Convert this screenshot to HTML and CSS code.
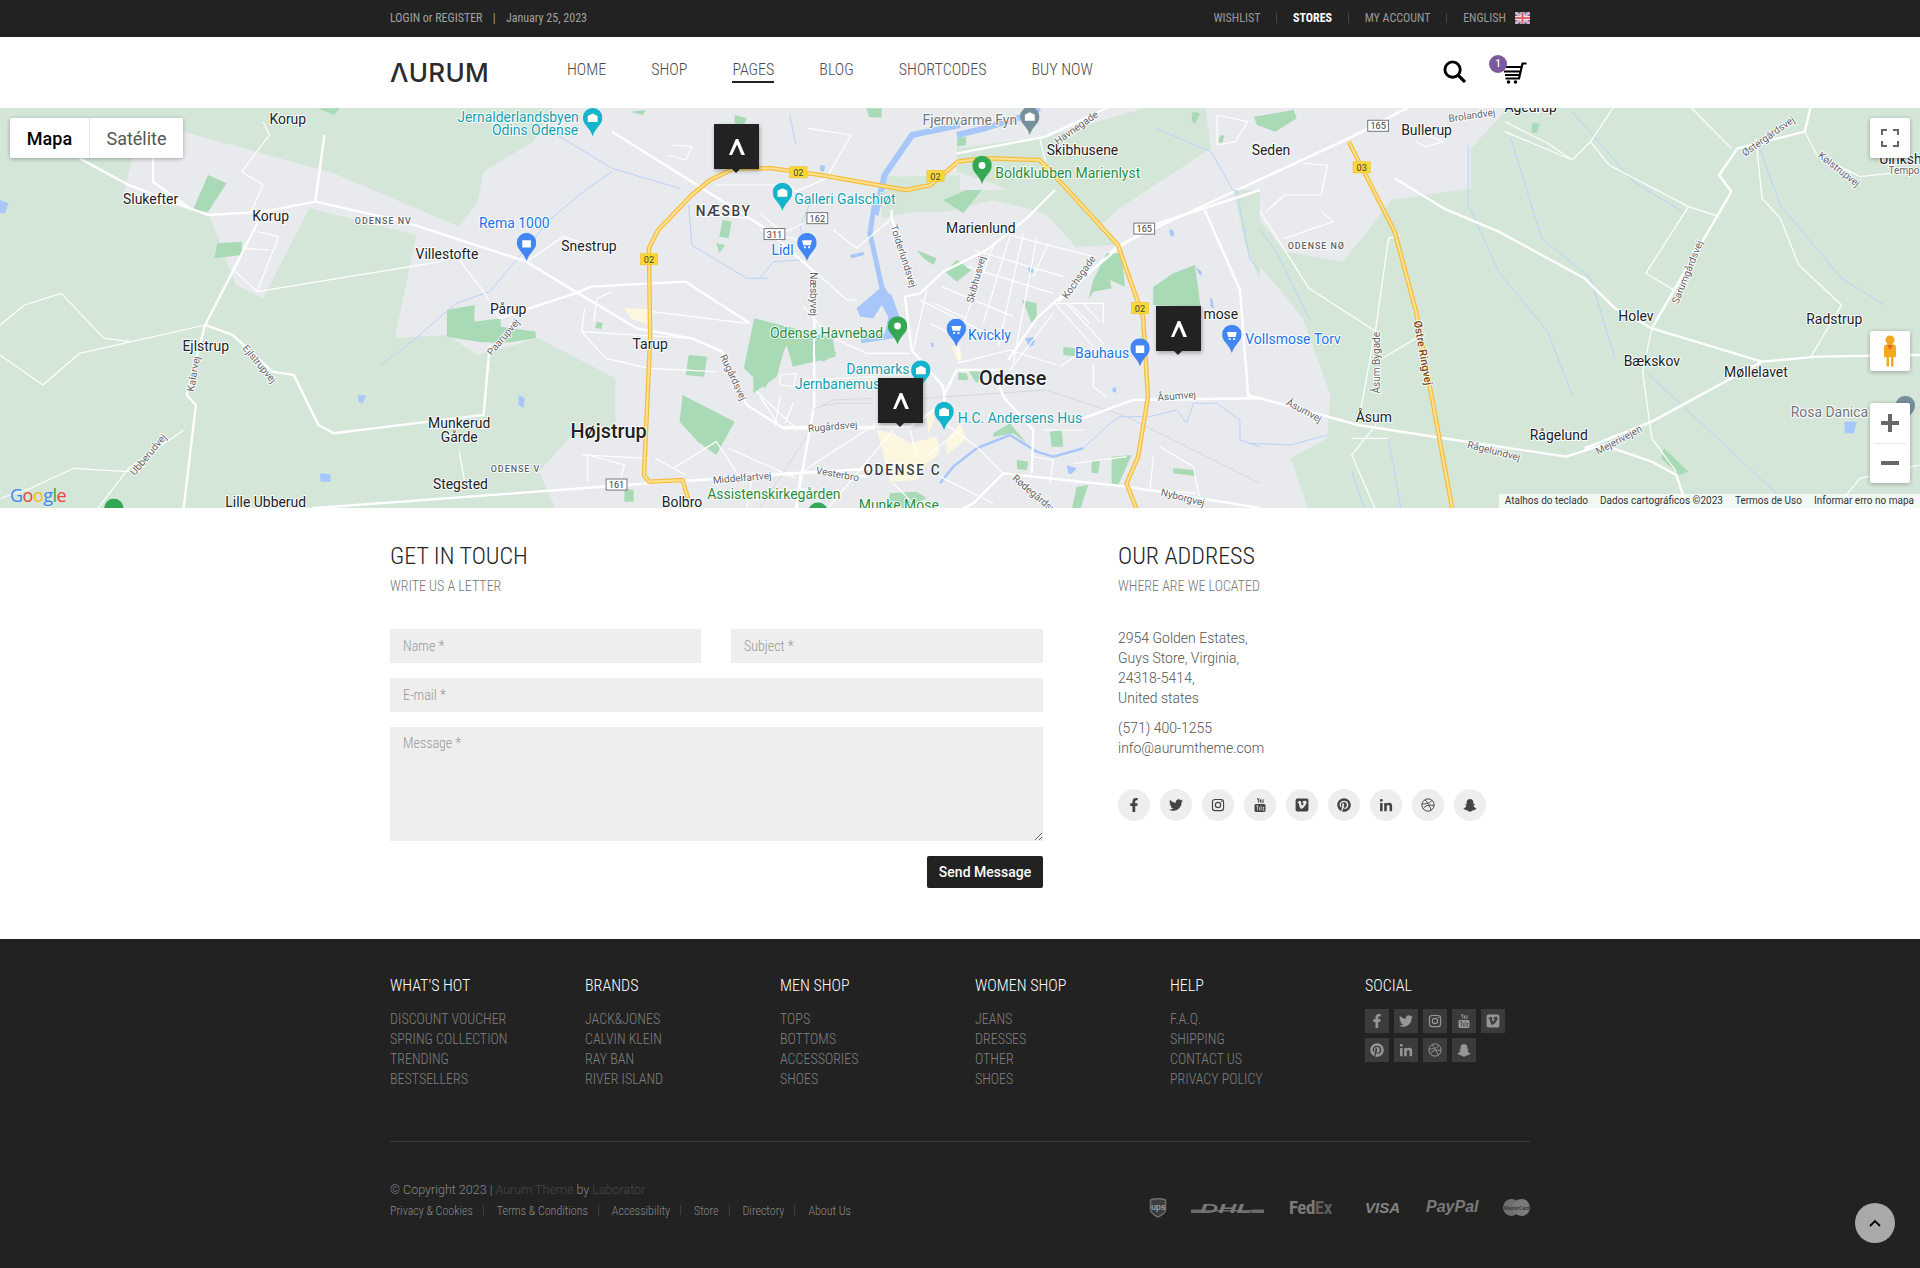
FILE: index.html
```html
<!DOCTYPE html>
<html lang="en">
<head>
<meta charset="utf-8">
<title>Contact – Aurum</title>
<link rel="stylesheet" href="styles.css">
</head>
<body>
<svg class="defs" width="0" height="0" aria-hidden="true">
  <symbol id="i-fb" viewBox="0 0 320 512"><path d="M279.14 288l14.22-92.66h-88.91v-60.13c0-25.35 12.42-50.06 52.24-50.06h40.42V6.26S260.43 0 225.36 0c-73.22 0-121.08 44.38-121.08 124.72v70.62H22.89V288h81.39v224h100.17V288z"/></symbol>
  <symbol id="i-tw" viewBox="0 0 512 512"><path d="M459.37 151.716c.325 4.548.325 9.097.325 13.645 0 138.72-105.583 298.558-298.558 298.558-59.452 0-114.68-17.219-161.137-47.106 8.447.974 16.568 1.299 25.34 1.299 49.055 0 94.213-16.568 130.274-44.832-46.132-.975-84.792-31.188-98.112-72.772 6.498.974 12.995 1.624 19.818 1.624 9.421 0 18.843-1.3 27.614-3.573-48.081-9.747-84.143-51.98-84.143-102.985v-1.299c13.969 7.797 30.214 12.67 47.431 13.319-28.264-18.843-46.781-51.005-46.781-87.391 0-19.492 5.197-37.36 14.294-52.954 51.655 63.675 129.3 105.258 216.365 109.807-1.624-7.797-2.599-15.918-2.599-24.04 0-57.828 46.782-104.934 104.934-104.934 30.213 0 57.502 12.67 76.67 33.137 23.715-4.548 46.456-13.32 66.599-25.34-7.798 24.366-24.366 44.833-46.132 57.827 21.117-2.273 41.584-8.122 60.426-16.243-14.292 20.791-32.161 39.308-52.628 54.253z"/></symbol>
  <symbol id="i-ig" viewBox="0 0 24 24"><path d="M7 1.500h10A5.500 5.500 0 0 1 22.500 7v10a5.500 5.500 0 0 1-5.500 5.500H7A5.500 5.500 0 0 1 1.500 17V7A5.500 5.500 0 0 1 7 1.500zm0 2A3.500 3.500 0 0 0 3.500 7v10A3.500 3.500 0 0 0 7 20.500h10a3.500 3.500 0 0 0 3.500-3.500V7A3.500 3.500 0 0 0 17 3.500zM12 6.500a5.500 5.500 0 1 1 0 11 5.500 5.500 0 0 1 0-11zm0 2a3.500 3.500 0 1 0 0 7 3.500 3.500 0 0 0 0-7zM18 4.800a1.200 1.200 0 1 1 0 2.400 1.200 1.200 0 0 1 0-2.400z" fill-rule="evenodd"/></symbol>
  <symbol id="i-yt" viewBox="0 0 24 28"><path d="M6 0h1.600l1 3.200L9.700 0h1.500L9.400 5.500v4H7.800v-4zM11.500 3.800c0-.9.600-1.400 1.400-1.400s1.400.5 1.400 1.400v4.100c0 .9-.6 1.500-1.400 1.500s-1.400-.6-1.400-1.500zM15.500 2.500h1.300v5.600c.5.200.8-.1 1-.3V2.500h1.300v7h-1.300v-.7c-.9 1-2.300.9-2.300-.4z"/><path fill-rule="evenodd" d="M4 12h16c1.700 0 3 1.300 3 3v10c0 1.700-1.300 3-3 3H4c-1.700 0-3-1.300-3-3V15c0-1.700 1.300-3 3-3zm.5 3v1.500h1.400V25h1.400v-8.500h1.400V15zM10 18v7h1.300v-7zM13.500 15v10h1.300v-10zM17.500 18v7h3v-1.400h-1.500v-4.200h1.500V18z"/></symbol>
  <symbol id="i-vm" viewBox="0 0 24 24"><path fill-rule="evenodd" d="M4 1h16a3 3 0 0 1 3 3v16a3 3 0 0 1-3 3H4a3 3 0 0 1-3-3V4a3 3 0 0 1 3-3zm15.800 6.500c.1-2-1-3-3-3-2.300 0-3.800 1.300-4.500 3.800 1.200-.6 2.800-.6 2.500 1.200-.2 1-2 3.800-2.700 3.800-1 0-1.500-5.500-2.200-7.300-.5-1.300-1.600-1.700-2.800-1-1 .6-2 1.600-3.300 2.700l.7 1c.5-.3 1.100-.8 1.500-.4.700.7 1.300 5.800 2.800 8.700.8 1.500 2 2 3.300 1.200 2.500-1.500 7.500-7 7.700-10.700z"/></symbol>
  <symbol id="i-pi" viewBox="0 0 496 512"><path d="M496 256c0 137-111 248-248 248-25.600 0-50.200-3.900-73.400-11.100 10.100-16.500 25.200-43.500 30.800-65 3-11.600 15.400-59 15.400-59 8.100 15.400 31.700 28.500 56.800 28.500 74.800 0 128.700-68.800 128.700-154.300 0-81.900-66.900-143.200-152.900-143.200-107 0-163.900 71.800-163.900 150.100 0 36.400 19.400 81.700 50.300 96.100 4.700 2.200 7.200 1.200 8.300-3.300.8-3.400 5-20.300 6.900-28.100.6-2.500.3-4.700-1.700-7.100-10.100-12.500-18.300-35.300-18.300-56.600 0-54.700 41.400-107.600 112-107.600 60.900 0 103.600 41.500 103.600 100.900 0 67.100-33.900 113.600-78 113.600-24.300 0-42.600-20.100-36.700-44.800 7-29.500 20.500-61.300 20.500-82.600 0-19-10.200-34.900-31.400-34.900-24.900 0-44.900 25.700-44.900 60.200 0 22 7.400 36.800 7.400 36.800s-24.500 103.800-29 123.200c-5 21.400-3 51.600-.9 71.200C65.400 450.900 0 361.100 0 256 0 119 111 8 248 8s248 111 248 248z"/></symbol>
  <symbol id="i-in" viewBox="0 0 448 512"><path transform="translate(0 32)" d="M100.280 448H7.400V148.900h92.880zM53.790 108.100C24.090 108.100 0 83.500 0 53.800a53.790 53.790 0 0 1 107.580 0c0 29.700-24.100 54.300-53.790 54.300zM447.900 448h-92.680V302.400c0-34.700-.7-79.200-48.290-79.200-48.290 0-55.690 37.700-55.690 76.700V448h-92.780V148.900h89.080v40.800h1.300c12.400-23.500 42.690-48.300 87.880-48.300 94 0 111.280 61.900 111.280 142.300V448z"/></symbol>
  <symbol id="i-dr" viewBox="0 0 24 24"><g fill="none" stroke="currentColor" stroke-width="1.700"><circle cx="12" cy="12" r="10.500"/><path d="M7 3.200c4 4.500 8.500 11 10.500 18M2 10c6 .5 12 .2 17-6M3.500 18.500C7 13.500 13 11 22 12.800"/></g></symbol>
  <symbol id="i-sn" viewBox="0 0 24 24"><path d="M12 1.500c3.800 0 5.800 2.800 5.800 6v3.200l2-.6c.8 0 1.100.9.500 1.400l-2.300 1.300c.6 2.300 2.500 4 5 5 .5.300.4.900-.1 1.100l-2.500.7-.5 1.600-2.500-.2c-1.600 0-2.800 2.500-5.400 2.500s-3.800-2.500-5.400-2.500l-2.500.2-.5-1.600-2.500-.7c-.5-.2-.6-.8-.1-1.100 2.500-1 4.400-2.700 5-5L3.700 12c-.6-.5-.3-1.400.5-1.400l2 .6V7.500c0-3.200 2-6 5.800-6z"/></symbol>
  <symbol id="i-mark" viewBox="0 0 16 16"><path d="M0 16 6.800 0H9.200L16 16H12.400L8 5.600 3 16z"/></symbol>
  <symbol id="pin" viewBox="0 0 18 26"><path d="M9 0a9 9 0 0 1 9 9c0 6.500-6.500 9-9 17C6.500 18 0 15.500 0 9a9 9 0 0 1 9-9z"/></symbol>
</svg>

<header class="topbar">
  <div class="wrap topbar-in">
    <div class="top-left">LOGIN or REGISTER <span class="bar">|</span> January 25, 2023</div>
    <nav class="top-right">
      <a class="top-link">WISHLIST</a><i class="tsep"></i>
      <a class="top-link strong">STORES</a><i class="tsep"></i>
      <a class="top-link">MY ACCOUNT</a><i class="tsep"></i>
      <a class="top-link">ENGLISH</a>
      <svg class="flag" viewBox="0 0 15 12"><rect width="15" height="12" fill="#4a6cb0"/><path d="M0 0l15 12M15 0 0 12" stroke="#f2e6e6" stroke-width="2.500"/><path d="M0 0l15 12M15 0 0 12" stroke="#e0707a" stroke-width="1"/><path d="M7.500 0v12M0 6h15" stroke="#f2e6e6" stroke-width="4"/><path d="M7.500 0v12M0 6h15" stroke="#e0606c" stroke-width="2.200"/></svg>
    </nav>
  </div>
</header>

<div class="mainbar">
  <div class="wrap mainbar-in">
    <a class="logo">ΛURUM</a>
    <nav class="menu">
      <a>HOME</a><a>SHOP</a><a class="active">PAGES</a><a>BLOG</a><a>SHORTCODES</a><a>BUY NOW</a>
    </nav>
    <div class="tools">
      <svg class="search" viewBox="0 0 24 24"><circle cx="10" cy="10" r="8" fill="none" stroke="#000" stroke-width="3"/><path d="M16 16l7 7" stroke="#000" stroke-width="3.400"/></svg>
      <div class="cart">
        <svg class="cart-ico" viewBox="0 0 25 22"><path d="M24.500 1.500h-4L17 16.500H3.500M1 5h18.500M2 9.500H18.300M3 13H17.300" fill="none" stroke="#000" stroke-width="2.200"/><circle cx="6.500" cy="20" r="1.800"/><circle cx="13.500" cy="20" r="1.800"/></svg>
        <span class="badge">1</span>
      </div>
    </div>
  </div>
</div>

<section class="map">
  <svg class="map-svg" viewBox="0 0 1920 400" preserveAspectRatio="none">
    <rect width="1920" height="400" class="land"/>
    <!-- west half -->
    <g transform="translate(0,-3) scale(.6122,.3333)">
      <path class="green" d="M0 0H905L870 110 790 200 780 290 750 365 545 205 290 75 215 165 200 280 340 320 385 540 430 580 505 310 680 390 645 700 730 690 780 750 880 700 1005 820 1005 960 930 1000 880 1100 910 1220H0z"/>
      <path class="green" d="M1440 340 1568 290V210L1470 215 1440 210z"/>
      <g class="park">
        <path d="M340 210 370 235 340 320 315 315z"/><path d="M355 415 395 410 395 450 350 460z"/>
        <path d="M730 615 775 600V650L818 640V665L875 680V700L820 715 780 710 730 695z"/>
        <path d="M1232 640 1360 700 1365 755 1295 785 1285 720 1250 850 1215 790z"/>
        <path d="M1115 870 1200 950 1170 1050 1140 1010 1110 950z"/><path d="M1125 750 1155 755 1150 815 1120 810z"/>
        <path d="M1180 345 1195 350 1190 400 1175 395z"/><path d="M1170 415 1185 420 1175 445z"/>
        <path d="M1200 30 1220 40 1215 60 1200 55z"/>
        <path d="M1030 20 1055 15 1050 30z"/><path d="M1415 10 1440 10 1440 38 1420 36z"/>
        <path d="M520 10 555 10 545 30z"/><path d="M975 650 985 655 982 672 972 668z"/>
        <path d="M1020 1150 1035 1155 1035 1190 1020 1190z"/>
      </g>
      <path class="sand" d="M1020 610 1060 612 1060 660 1030 640z"/>
      <g class="water">
        <path d="M910 90 1000 190 1110 250M1000 200 960 250 900 340 800 560 745 595 660 730 620 780M1125 300 1130 420 1220 520 1255 520M1290 30 1300 120"/>
      </g>
      <path class="river" d="M1568 60 1490 90 1445 210 1430 330"/>
      <path class="lake" d="M0 285 14 295 8 325 0 325zM585 870 598 872 592 895 585 890zM847 870 857 880 855 910 847 900zM522 1105 540 1108 540 1130 524 1130zM1340 180 1348 182 1346 200 1340 198z"/>
      <g class="road">
        <path d="M530 90 515 290 660 350 860 470 940 560 1040 670 1130 700 1180 740 1220 900 1280 970 1430 970M515 290 430 320 340 330 310 310 250 230 250 100M130 160 210 240 310 310M430 320 380 500 335 660 305 870 320 900 300 1210M335 660 380 690 445 800 480 810 520 960 545 985 700 950 790 930 800 720M1000 80 1130 230 1250 370 1330 500 1330 900 1300 1210M510 1210 1060 1135 1430 1090M815 640 940 565 965 545 1120 530 1145 560 1225 655"/>
      </g>
      <g class="road thin">
        <path d="M335 660 215 710 130 745 70 840 0 750M0 660 40 600 100 565 170 700 215 710M420 560 720 470 740 440 790 560 815 640M860 470 920 395 1000 440M430 50 440 90 395 200 430 240 410 320M420 380 455 395 420 560 385 500M400 430 440 435M300 975 210 1090 160 1210M210 1100 120 1090 50 1150 0 1180M750 1040 760 1140M1320 70 1390 90 1350 220 1300 260M1100 120 1130 125 1120 165 1090 150M1170 240 1290 240 1310 280M1170 330 1220 340M1065 620 1220 655M950 680 1130 700M955 610 950 680 990 760 1060 790M1060 790 1170 800M1000 560 975 580 970 650M1100 1090 1170 1010 1210 1120M1230 850 1300 970M1190 1030 1300 1120M1220 1210 1230 1100M950 1050 1060 1060M960 1130 960 1050 1020 1080 1010 1150M1070 1060 1120 1110M1240 1160 1330 1150"/>
      </g>
      <path class="hw-o" d="M1568 165 1520 240 1480 255 1340 210 1260 190 1200 190 1160 225 1130 270 1075 375 1060 430 1062 700 1052 1110 1060 1130 1115 1125 1130 1220"/>
      <path class="hw-i" d="M1568 165 1520 240 1480 255 1340 210 1260 190 1200 190 1160 225 1130 270 1075 375 1060 430 1062 700 1052 1110 1060 1130 1115 1125 1130 1220"/>
    </g>
    <!-- east half -->
    <g transform="translate(960,-3) scale(.6122,.3333)">
      <path class="green" d="M900 0 835 130 835 250 705 285 670 370 625 470 530 440 480 320 450 265 480 460 560 640 605 870 600 1000 540 1060 570 1220H1570V0z"/>
      <path class="green" d="M-5 130 140 95 320 0 400 0 410 130 260 310 190 430 150 330 60 240-5 200z"/>
      <g class="park">
        <path d="M480 35 545 15 550 40 515 80 485 60z"/><path d="M-5 100 10 95 10 120-5 125z"/>
        <path d="M1150 1030 1190 1100 1175 1110 1145 1060z"/>
        <path d="M935 55 947 55 942 85 933 80z"/>
        <path d="M425 90 432 92 428 115 422 110z"/><path d="M380 20 392 25 385 55 378 50z"/>
      </g>
      <g class="water">
        <path d="M320 70 410 140 450 270 520 450 570 640M470 1015 540 1020 600 990M830 120 830 300 880 500 960 680 1000 870M900 100 950 400 1030 520 1070 760M1120 800 1360 1210M1000 20 1100 230 1180 320M1300 100 1340 300 1440 520 1510 600M640 1100 660 1210M700 1000 720 1210"/>
      </g>
      <path class="river" d="M-5 90 40 70 110 30 130 10"/>
      <path class="lake" d="M345 375 350 390 345 395 342 380zM1445 950 1465 950 1460 985 1445 985z"/>
      <g class="road">
        <path d="M740 0 635 100 400 300 260 420 160 590M-5 145 140 95 250 0M470 870 650 960 790 1000 990 1055 1050 1020 1130 1070 1170 1110 1190 1220M1310 770 1400 755 1568 750M1310 770 1130 950 1020 1030M1130 670 1260 260 1240 210 1270 130 1380 80 1390 0M710 220 790 310 880 380 1020 520 1070 610 1130 670 1310 770"/>
      </g>
      <g class="road thin">
        <path d="M130 100 140 170M650 960 680 660 700 400 720 390M680 960 640 1050 680 1220M1130 670 1115 800 1130 1000 1170 1100M1380 80 1400 150 1470 215 1568 195M1000 165 890 80M1030 110 1000 165 960 115 890 50M1190 0 1260 130M1190 305 1240 335M1060 180 1190 305 1120 505 1180 570M1070 0 1030 110 1060 180M500 320 530 270 590 270 600 180 560 175M590 320 610 350 530 400M470 260 570 550 680 680M1430 1210 1470 1120 1568 1080M1440 600 1390 755M1300 100 1310 280 1340 340 1370 480 1440 600M690 760 745 700M420 30 470 50 450 110 420 120zM760 90 790 110 760 125 745 110M640 1000 700 1000"/>
      </g>
      <path class="hw-o" d="M635 110 710 380 745 620 805 1220"/>
      <path class="hw-i" d="M635 110 710 380 745 620 805 1220"/>
    </g>
    <!-- city centre, drawn at 1/3 scale -->
    <g transform="translate(760,82) scale(.3333)">
      <path class="green" d="M400 65 520 0H930L1075 165 950 170 860 75 800 55 700 30 560 65z"/>
      <path class="green" d="M1420 0 1500 0V270L1455 160z"/>
      <g class="park">
        <path d="M-20 400 75 470 50 560-20 610zM165 450 230 490 190 515 165 500z"/>
        <path d="M550 30 620 0H665L610 70z"/><path d="M470 180 530 205 520 225 490 205z"/><path d="M555 245 590 210 635 240 590 275z"/>
        <path d="M785 330 830 340 830 385 815 400 800 360z"/><path d="M1040 190 1085 190 1095 290 1050 270 1055 295 1000 305 985 330 1000 270 1010 250z"/>
        <path d="M1180 290 1240 250 1305 225 1322 350 1180 345z"/><path d="M910 470 945 475 945 498 910 495z"/><path d="M595 548 620 550 625 570 595 570z"/>
        <path d="M625 540 680 540 650 580 640 565z"/><path d="M700 730 750 700 800 760 760 730 700 740z"/><path d="M870 725 905 720 910 770 875 770z"/>
        <path d="M770 810 805 815 800 840 772 838z"/><path d="M995 810 1020 810 1015 850 995 848z"/><path d="M1055 800 1115 795 1075 885 1055 880z"/>
        <path d="M1240 835 1305 840 1305 858 1240 850z"/><path d="M950 890 985 885 960 960 935 960z"/><path d="M390 910 470 905 500 925 420 960 380 960z"/>
      </g>
      <path class="sand" d="M350 720 400 730 450 760 530 740 540 790 500 820 470 870 390 875 370 790z"/>
      <path class="sand" d="M560 750 600 700 620 745 560 795zM575 470 600 465 605 510 590 510zM500 680 525 650 520 700 505 730z"/>
      <path class="river thick" d="M345 30 330 130 365 290 400 350"/>
      <path class="lake" d="M290 355 360 295 395 315 420 385 400 445 305 460 300 435 375 430 385 380 365 345 340 385 300 380z"/>
      <path class="lake" d="M270 195 310 185 312 195 275 205zM805 230 818 228 820 248 808 248zM512 458 520 458 522 470 514 470zM795 445 825 440 822 465 808 470zM1228 118 1240 120 1242 138 1232 136zM1057 595 1068 592 1068 608 1058 606zM920 826 950 835 935 852 925 850zM1350 322 1358 330 1362 355 1352 350zM1310 232 1325 245 1325 258 1315 250z"/>
      <path class="river thin2" d="M540 880 580 830 650 775 750 735 830 785 880 800 970 775"/>
      <path class="water-l" d="M970 775 1050 700 1080 680 1170 680 1250 660 1280 700 1300 640 1370 640 1440 690 1440 750 1500 770M1430 0 1470 210 1500 240M0 265 40 215 120 210M150 40 120 110 130 140"/>
      <path class="rail" d="M160 660 220 630 340 625M180 650 230 640 340 640M490 625 860 600 1100 680 1500 880M0 954 140 740"/>
      <g class="road">
        <path d="M1500 0 1180 105 1080 170 885 335 830 385 745 510M885 0 800 85 680 180 550 245 480 310 435 320 455 480 550 590 555 640M1330 50 1440 300 1465 620M970 685 1120 630 1500 625M730 850 1100 890 1500 954M730 850 640 940 600 960M720 590 730 620 820 720 815 850M395 60 395 85 465 290M0 855 170 845 320 860M555 610 590 540 730 540M350 710 450 710 550 640"/>
      </g>
      <g class="road thin">
        <path d="M700 170 610 400M750 135 670 400M790 130 715 470M830 145 760 520M865 160 820 260M620 230 880 310M545 290 760 380M480 330 700 440M640 180 910 260M750 135 1000 200M500 300 460 480M590 520 750 480 890 525M880 370 750 540M920 340 1030 460 1000 490M890 340 1030 340 1030 400M930 340 990 400M970 340 1020 395M885 340 1000 470M1000 520 1000 590 1040 620M900 530 945 500M0 620 60 710 350 710M60 620 45 710M100 640 75 700M130 570 350 560M60 555 110 550 100 590 60 585zM350 700 120 850 110 960M400 720 200 960M450 720 470 800M540 690 650 770 730 850M600 720 500 800M400 880 480 960M540 860 700 940M850 720 970 720M1180 800 1170 900M1200 770 1300 830 1320 930M1170 900 1310 910M940 820 1100 800M820 800 880 810 870 880M0 70 70 130 130 100M220 120 290 175 390 90M160 240 260 330 290 330M0 120 160 160M450 490 320 490 210 440 130 350M590 400 600 520M520 340 620 385M510 400 590 440"/>
      </g>
    </g>
    <!-- ring road, above the streets -->
    <g transform="translate(960,-3) scale(.6122,.3333)">
      <path class="hw-o" d="M-5 170 40 160 130 165 176 255 258 420 299 635 307 875 291 1055 272 1135 290 1220"/>
      <path class="hw-i" d="M-5 170 40 160 130 165 176 255 258 420 299 635 307 875 291 1055 272 1135 290 1220"/>
    </g>
    <!-- pins, shields and labels -->
    <g transform="translate(0,-107.760) scale(1.2245)">
      <g class="p-teal">
        <use href="#pin" x="476" y="88" width="16" height="23"/><use href="#pin" x="631" y="149" width="16" height="23"/><use href="#pin" x="744" y="294" width="16" height="23"/><use href="#pin" x="763" y="328" width="16" height="23"/>
      </g>
      <g class="p-green">
        <use href="#pin" x="794" y="127" width="16" height="23"/><use href="#pin" x="725" y="258" width="16" height="23"/><use href="#pin" x="85" y="407" width="16" height="23"/><use href="#pin" x="660" y="410" width="16" height="23"/>
      </g>
      <g class="p-blue">
        <use href="#pin" x="422" y="190" width="16" height="23"/><use href="#pin" x="651" y="190" width="16" height="23"/><use href="#pin" x="773" y="260" width="16" height="23"/><use href="#pin" x="923" y="276" width="16" height="23"/><use href="#pin" x="998" y="265" width="16" height="23"/>
      </g>
      <g class="p-gray">
        <use href="#pin" x="833" y="87" width="16" height="23"/><use href="#pin" x="1548" y="323" width="16" height="23"/>
      </g>
      <g class="p-ico">
        <path d="M484 92.500l4 2v5h-8v-5zM639 153.500l4 2v5h-8v-5zM752 298.500l4 2v5h-8v-5zM771 332.500l4 2v5h-8v-5zM841 91.500l4 2v5h-8v-5z"/>
        <circle cx="802" cy="135" r="2.800"/><circle cx="733" cy="266" r="2.800"/>
        <path d="M426.500 196h7v6h-7zM927.500 282h7v6h-7z"/>
        <path d="M655 196h8l-1 4h-6zM777 266h8l-1 4h-6zM1002 271h8l-1 4h-6z"/>
        <path d="M656.500 201h1.500v1.500h-1.500zM660 201h1.500v1.500H660zM778.500 271h1.500v1.500h-1.500zM782 271h1.500v1.500H782zM1003.500 276h1.500v1.500h-1.500zM1007 276h1.500v1.500H1007z"/>
      </g>
      <g class="sh-y">
        <rect x="645" y="136" width="14" height="9"/><rect x="757" y="139" width="14" height="9"/><rect x="523" y="207" width="14" height="9"/><rect x="924" y="247" width="14" height="9"/><rect x="1105" y="132" width="14" height="9"/>
      </g>
      <g class="sh-y-t">
        <text x="652" y="140.700">02</text><text x="764" y="143.700">02</text><text x="530" y="211.700">02</text><text x="931" y="251.700">02</text><text x="1112" y="136.700">03</text>
      </g>
      <g class="sh-w">
        <rect x="1117" y="98" width="17" height="9"/><rect x="926" y="182" width="17" height="9"/><rect x="659" y="173.500" width="17" height="9"/><rect x="624" y="186.500" width="17" height="9"/><rect x="495" y="391" width="17" height="9"/>
      </g>
      <g class="sh-w-t">
        <text x="1125.500" y="102.700">165</text><text x="934.500" y="186.700">165</text><text x="667.500" y="178.200">162</text><text x="632.500" y="191.200">311</text><text x="503.500" y="395.700">161</text>
      </g>
      <g class="lb town">
        <text x="235" y="97">Korup</text><text x="123" y="162">Slukefter</text><text x="221" y="176">Korup</text><text x="365" y="207">Villestofte</text><text x="481" y="201">Snestrup</text><text x="415" y="252">Pårup</text><text x="531" y="281">Tarup</text><text x="168" y="282">Ejlstrup</text><text x="375" y="345">Munkerud</text><text x="375" y="357">Gårde</text><text x="376" y="395">Stegsted</text><text x="217" y="410">Lille Ubberud</text><text x="557" y="410">Bolbro</text><text x="801" y="186">Marienlund</text><text x="884" y="122">Skibhusene</text><text x="1038" y="122">Seden</text><text x="1165" y="106">Bullerup</text><text x="1336" y="258">Holev</text><text x="1498" y="260">Radstrup</text><text x="1349" y="295">Bækskov</text><text x="1434" y="304">Møllelavet</text><text x="1122" y="340">Åsum</text><text x="1273" y="355">Rågelund</text><text x="997" y="256">mose</text>
      </g>
      <g class="lb big"><text x="497" y="352">Højstrup</text><text x="827" y="309">Odense</text></g>
      <g class="lb caps"><text x="591" y="172">NÆSBY</text><text x="737" y="384">ODENSE C</text></g>
      <g class="lb smallcaps"><text x="313" y="180">ODENSE NV</text><text x="421" y="383">ODENSE V</text><text x="1075" y="201">ODENSE NØ</text></g>
      <g class="lb teal"><text x="423" y="95">Jernalderlandsbyen</text><text x="437" y="106">Odins Odense</text><text x="690" y="162">Galleri Galschiøt</text><text x="717" y="301">Danmarks</text><text x="684" y="313">Jernbanemus</text><text x="833" y="341">H.C. Andersens Hus</text></g>
      <g class="lb grn"><text x="872" y="141">Boldklubben Marienlyst</text><text x="675" y="272">Odense Havnebad</text><text x="632" y="403">Assistenskirkegården</text><text x="734" y="412">Munke Mose</text></g>
      <g class="lb blu"><text x="420" y="182">Rema 1000</text><text x="639" y="204">Lidl</text><text x="808" y="273">Kvickly</text><text x="900" y="288">Bauhaus</text><text x="1056" y="277">Vollsmose Torv</text></g>
      <g class="lb gry"><text x="792" y="98">Fjernvarme Fyn</text><text x="1494" y="336">Rosa Danica</text></g>
      <g class="lb rd">
        <text x="158" y="305" transform="rotate(-80 158 305)">Kalarvej</text><text x="212" y="297" transform="rotate(50 212 297)">Ejlstrupvej</text><text x="121" y="371" transform="rotate(-50 121 371)">Ubberudvej</text><text x="411" y="275" transform="rotate(-50 411 275)">Paarupvej</text><text x="599" y="308" transform="rotate(65 599 308)">Rugårdsvej</text><text x="680" y="348" transform="rotate(-5 680 348)">Rugårdsvej</text><text x="664" y="240" transform="rotate(90 664 240)">Næsbyvej</text><text x="738" y="209" transform="rotate(72 738 209)">Tolderlundsvej</text><text x="797" y="228" transform="rotate(-75 797 228)">Skibhusvej</text><text x="881" y="226" transform="rotate(-55 881 226)">Kochsgade</text><text x="879" y="104" transform="rotate(-35 879 104)">Havnegade</text><text x="1202" y="94" transform="rotate(-8 1202 94)">Brolandvej</text><text x="1124" y="296" transform="rotate(-90 1124 296)">Åsum Bygade</text><text x="961" y="323" transform="rotate(-5 961 323)">Åsumvej</text><text x="1065" y="335" transform="rotate(28 1065 335)">Åsumvej</text><text x="1220" y="368" transform="rotate(14 1220 368)">Rågelundvej</text><text x="1322" y="359" transform="rotate(-28 1322 359)">Mejerivejen</text><text x="966" y="406" transform="rotate(14 966 406)">Nyborgvej</text><text x="847" y="405" transform="rotate(40 847 405)">Rødegårdsvej</text><text x="684" y="387" transform="rotate(10 684 387)">Vesterbro</text><text x="606" y="390" transform="rotate(-5 606 390)">Middelfartvej</text><text x="1378" y="222" transform="rotate(-68 1378 222)">Sarumgårdsvej</text><text x="1444" y="111" transform="rotate(-35 1444 111)">Østergårdsvej</text><text x="1502" y="138" transform="rotate(38 1502 138)">Kølstrupvej</text><text x="1555" y="139">Tempo</text>
        <text x="1162" y="288" class="rd-b" transform="rotate(80 1162 288)">Østre Ringvej</text>
      </g>
      <g class="lb town"><text x="1250" y="87">Agedrup</text><text x="1552" y="130">Ulriksh</text></g>
    </g>
  </svg>

  <div class="gm-type">
    <button class="gm-type-btn on">Mapa</button><button class="gm-type-btn">Satélite</button>
  </div>
  <div class="gm-btn gm-full">
    <svg viewBox="0 0 18 18"><path d="M0 6V0h6v2H2v4zM12 0h6v6h-2V2h-4zM18 12v6h-6v-2h4v-4zM6 18H0v-6h2v4h4z" fill="#666"/></svg>
  </div>
  <div class="gm-btn gm-peg">
    <svg viewBox="0 0 20 32"><circle cx="10" cy="5" r="4.500" fill="#f4a81d"/><path d="M4 12c0-2 2-3 6-3s6 1 6 3v10h-2.500v9.500H11V22H9v9.500H6.500V22H4z" fill="#f4a81d"/><path d="M7 10l3 5 3-5z" fill="#d9662a"/></svg>
  </div>
  <div class="gm-zoom">
    <div class="gm-z">
      <svg viewBox="0 0 18 18"><path d="M7 0h4v7h7v4h-7v7H7v-7H0V7h7z" fill="#666"/></svg>
    </div>
    <div class="gm-z gm-z2">
      <svg viewBox="0 0 18 18"><path d="M0 7h18v4H0z" fill="#666"/></svg>
    </div>
  </div>
  <div class="gm-logo"><b class="g1">G</b><b class="g2">o</b><b class="g3">o</b><b class="g1">g</b><b class="g4">l</b><b class="g2">e</b></div>
  <div class="gm-attr"><span>Atalhos do teclado</span><span>Dados cartográficos ©2023</span><span>Termos de Uso</span><span>Informar erro no mapa</span></div>

  <div class="marker m1"><svg viewBox="0 0 16 16"><use href="#i-mark"/></svg></div>
  <div class="marker m2"><svg viewBox="0 0 16 16"><use href="#i-mark"/></svg></div>
  <div class="marker m3"><svg viewBox="0 0 16 16"><use href="#i-mark"/></svg></div>
</section>

<section class="contact">
  <div class="wrap contact-in">
    <div class="col-form">
      <h2 class="sec-title">GET IN TOUCH</h2>
      <p class="sec-sub">WRITE US A LETTER</p>
      <form class="form">
        <div class="form-row">
          <input class="field" placeholder="Name *">
          <input class="field" placeholder="Subject *">
        </div>
        <input class="field" placeholder="E-mail *">
        <textarea class="field area" placeholder="Message *"></textarea>
        <div class="form-end"><button type="button" class="send">Send Message</button></div>
      </form>
    </div>
    <div class="col-addr">
      <h2 class="sec-title">OUR ADDRESS</h2>
      <p class="sec-sub">WHERE ARE WE LOCATED</p>
      <p class="addr first">2954 Golden Estates,<br>Guys Store, Virginia,<br>24318-5414,<br>United states</p>
      <p class="addr">(571) 400-1255<br>info@aurumtheme.com</p>
      <div class="round-icons">
        <a class="ri"><svg><use href="#i-fb"/></svg></a>
        <a class="ri"><svg><use href="#i-tw"/></svg></a>
        <a class="ri"><svg><use href="#i-ig"/></svg></a>
        <a class="ri"><svg><use href="#i-yt"/></svg></a>
        <a class="ri"><svg><use href="#i-vm"/></svg></a>
        <a class="ri"><svg><use href="#i-pi"/></svg></a>
        <a class="ri"><svg><use href="#i-in"/></svg></a>
        <a class="ri"><svg><use href="#i-dr"/></svg></a>
        <a class="ri"><svg><use href="#i-sn"/></svg></a>
      </div>
    </div>
  </div>
</section>

<footer class="footer">
  <div class="wrap">
    <div class="f-cols">
      <div class="f-col"><h4>WHAT'S HOT</h4><a>DISCOUNT VOUCHER</a><a>SPRING COLLECTION</a><a>TRENDING</a><a>BESTSELLERS</a></div>
      <div class="f-col"><h4>BRANDS</h4><a>JACK&amp;JONES</a><a>CALVIN KLEIN</a><a>RAY BAN</a><a>RIVER ISLAND</a></div>
      <div class="f-col"><h4>MEN SHOP</h4><a>TOPS</a><a>BOTTOMS</a><a>ACCESSORIES</a><a>SHOES</a></div>
      <div class="f-col"><h4>WOMEN SHOP</h4><a>JEANS</a><a>DRESSES</a><a>OTHER</a><a>SHOES</a></div>
      <div class="f-col"><h4>HELP</h4><a>F.A.Q.</a><a>SHIPPING</a><a>CONTACT US</a><a>PRIVACY POLICY</a></div>
      <div class="f-col f-social"><h4>SOCIAL</h4>
        <div class="sq-icons">
          <a class="sq"><svg><use href="#i-fb"/></svg></a>
          <a class="sq"><svg><use href="#i-tw"/></svg></a>
          <a class="sq"><svg><use href="#i-ig"/></svg></a>
          <a class="sq"><svg><use href="#i-yt"/></svg></a>
          <a class="sq"><svg><use href="#i-vm"/></svg></a>
          <a class="sq"><svg><use href="#i-pi"/></svg></a>
          <a class="sq"><svg><use href="#i-in"/></svg></a>
          <a class="sq"><svg><use href="#i-dr"/></svg></a>
          <a class="sq"><svg><use href="#i-sn"/></svg></a>
        </div>
      </div>
    </div>
    <div class="f-bottom">
      <div class="f-legal">
        <p class="copy">© Copyright 2023 | <a>Aurum Theme</a> by <a>Laborator</a></p>
        <div class="f-links"><a>Privacy &amp; Cookies</a><a>Terms &amp; Conditions</a><a>Accessibility</a><a>Store</a><a>Directory</a><a>About Us</a></div>
      </div>
      <div class="pay">
        <svg class="pl-ups" viewBox="0 0 18 21"><path d="M1.500 3C5 1.300 13 1.300 16.500 3v10c0 3-3.500 5-7.500 7C5 18 1.500 16 1.500 13z" fill="#3c3c3c" stroke="#6e6e6e" stroke-width="1.400"/><text x="9" y="13" class="ups-t">ups</text></svg>
        <svg class="pl-dhl" viewBox="0 0 73 10"><path d="M0 6.500h12l-1 3.500H0zM61 6.500h12V10H60zM12 7h50v1.500H12z" fill="#6a6a6a"/><text x="9" y="10" class="dhl-t" textLength="52" lengthAdjust="spacingAndGlyphs">DHL</text></svg>
        <span class="pl-fx">Fed<span class="pl-ex">Ex</span></span>
        <span class="pl-visa">VISA</span>
        <span class="pl-pp">PayPal</span>
        <svg class="pl-mc" viewBox="0 0 27 17"><circle cx="8.500" cy="8.500" r="8.500" fill="#6f6f6f"/><circle cx="18.500" cy="8.500" r="8.500" fill="#7a7a7a"/><text x="13.500" y="10.500" class="mc-t">MasterCard</text></svg>
      </div>
    </div>
  </div>
</footer>

<a class="to-top"><svg viewBox="0 0 12 8"><path d="M1 7l5-5 5 5" fill="none" stroke="#000" stroke-width="1.800"/></svg></a>
</body>
</html>
```

FILE: styles.css
```css
* { box-sizing: border-box; }
html, body { margin: 0; padding: 0; }
body { font-family: Roboto, "Liberation Sans", sans-serif; background: #fff; color: #333; }
.defs { position: absolute; }
.wrap { width: 1140px; margin: 0 auto; }
a { color: inherit; text-decoration: none; }

.topbar, .menu, .sec-title, .sec-sub, .field, .f-col, .f-links {
  font-family: "Roboto Condensed", "Liberation Sans Narrow", Roboto, sans-serif;
  font-stretch: 75%;
}

/* top bar */
.topbar { background: #222; height: 37px; color: #a0a0a0; font-size: 12px; }
.topbar-in { display: flex; justify-content: space-between; align-items: center; height: 36px; }
.bar { margin: 0 7.500px; }
.top-right { display: flex; align-items: center; }
.top-link { color: #999; }
.top-link.strong { color: #fff; font-weight: 700; }
.tsep { width: 1px; height: 10px; background: #444; margin: 0 15.800px; }
.flag { width: 15px; height: 12px; margin-left: 9px; }

/* main bar */
.mainbar { height: 71px; background: #fff; }
.mainbar-in { display: flex; align-items: center; height: 71px; }
.logo { font-family: Inter, Roboto, sans-serif; font-size: 26px; font-weight: 500; color: #2b2b2b; letter-spacing: .3px; width: 177px; }
.menu { display: flex; gap: 45px; font-size: 16px; font-weight: 300; color: #4a4a4a; margin-top: -2px; }
.menu a { padding-bottom: 1px; border-bottom: 2px solid transparent; line-height: 20px; }
.menu a.active { border-bottom-color: #222; }
.tools { margin-left: auto; display: flex; align-items: center; gap: 36px; padding-right: 3px; }
.search { width: 23px; height: 23px; position: relative; top: -1px; }
.cart { position: relative; width: 25px; height: 22px; }
.cart-ico { width: 25px; height: 22px; display: block; }
.badge { position: absolute; left: -13px; top: -7px; width: 18px; height: 18px; border-radius: 50%; background: #7b5a9e; color: #fff; font-size: 10px; font-weight: 500; text-align: center; line-height: 18px; }

/* map */
.map { position: relative; height: 400px; overflow: hidden; background: #e8eaed; }
.map-svg { display: block; width: 1920px; height: 400px; }
.land { fill: #e8eaed; }
.green { fill: #d3e6d8; }
.park { fill: #a8dab5; }
.sand { fill: #fef7e0; }
.lake { fill: #a7c7fa; }
.water path, .water-l { fill: none; stroke: #b9d2fa; stroke-width: 1; vector-effect: non-scaling-stroke; }
.river { fill: none; stroke: #a7c7fa; stroke-width: 6; vector-effect: non-scaling-stroke; }
.river.thick { stroke-width: 5; }
.river.thin2 { stroke-width: 2.500; }
.road path { fill: none; stroke: #fff; stroke-width: 2.400; vector-effect: non-scaling-stroke; stroke-linejoin: round; }
.road.thin path { stroke-width: 1.200; }
.rail { fill: none; stroke: #d6d8dc; stroke-width: 1; vector-effect: non-scaling-stroke; }
.hw-o { fill: none; stroke: #f6bd3c; stroke-width: 4.500; vector-effect: non-scaling-stroke; stroke-linejoin: round; }
.hw-i { fill: none; stroke: #fde293; stroke-width: 2; vector-effect: non-scaling-stroke; stroke-linejoin: round; }
.p-teal { fill: #12b5cb; }
.p-green { fill: #34a853; }
.p-blue { fill: #4285f4; }
.p-gray { fill: #78909c; }
.p-ico { fill: #fff; }
.sh-y { fill: #fdd835; stroke: #f1c232; stroke-width: .6; }
.sh-w { fill: #fff; stroke: #5f6368; stroke-width: .7; }
.sh-y-t text, .sh-w-t text { font-size: 7.500px; text-anchor: middle; dominant-baseline: central; fill: #3c4043; font-family: Roboto, sans-serif; }
.lb text { text-anchor: middle; dominant-baseline: central; font-family: Roboto, sans-serif; paint-order: stroke; stroke: #fff; stroke-width: 1.500px; stroke-linejoin: round; }
.town text { font-size: 11.400px; fill: #202124; }
.big text { font-size: 16.200px; font-weight: 500; fill: #202124; }
.caps text { font-size: 11.200px; font-weight: 500; letter-spacing: 1.400px; fill: #3c4043; }
.smallcaps text { font-size: 7.300px; font-weight: 500; letter-spacing: .8px; fill: #5f6368; }
.teal text { font-size: 11.400px; fill: #129eaf; }
.grn text { font-size: 11.400px; fill: #1e8e3e; }
.blu text { font-size: 11.400px; fill: #1a73e8; }
.gry text { font-size: 11.400px; fill: #70757a; }
.rd text { font-size: 8.200px; fill: #5f6368; }
.rd .rd-b { fill: #7a4a10; font-size: 9px; font-weight: 500; }

.gm-type { position: absolute; left: 10px; top: 10px; display: flex; height: 40px; background: #fff; border-radius: 2px; box-shadow: 0 1px 4px rgba(0,0,0,.3); overflow: hidden; }
.gm-type-btn { border: 0; background: #fff; font: 18px Roboto, sans-serif; color: #565656; padding: 0; width: 94px; border-left: 1px solid #e6e6e6; }
.gm-type-btn.on { color: #000; font-weight: 500; width: 79px; border-left: 0; }
.gm-btn { position: absolute; right: 10px; width: 40px; height: 40px; background: #fff; border-radius: 2px; box-shadow: 0 1px 4px rgba(0,0,0,.3); display: flex; align-items: center; justify-content: center; }
.gm-full { top: 10px; }
.gm-full svg { width: 18px; height: 18px; }
.gm-peg { top: 223px; }
.gm-peg svg { width: 20px; height: 32px; }
.gm-zoom { position: absolute; right: 10px; top: 295px; width: 40px; height: 80px; background: #fff; border-radius: 2px; box-shadow: 0 1px 4px rgba(0,0,0,.3); }
.gm-z { height: 40px; display: flex; align-items: center; justify-content: center; }
.gm-z2 { position: relative; }
.gm-z2::before { content: ""; position: absolute; left: 4px; right: 4px; top: 0; height: 1px; background: #e6e6e6; }
.gm-z svg { width: 18px; height: 18px; }
.gm-logo { position: absolute; left: 10px; bottom: 3px; font: 18px "Open Sans", Roboto, sans-serif; letter-spacing: -.5px; line-height: 20px; }
.gm-logo b { font-weight: 500; }
.g1 { color: #4285f4; } .g2 { color: #ea4335; } .g3 { color: #fbbc05; } .g4 { color: #34a853; }
.gm-attr { position: absolute; right: 0; bottom: 0; height: 14px; display: flex; background: rgba(255,255,255,.7); font-size: 10px; line-height: 14px; color: #333; }
.gm-attr span { padding: 0 6px; }
.marker { position: absolute; width: 45px; height: 45px; background: #222; display: flex; align-items: center; justify-content: center; box-shadow: 1px 2px 4px rgba(0,0,0,.3); }
.marker::after { content: ""; position: absolute; left: 18px; bottom: -4px; border: 4px solid transparent; border-bottom: 0; border-top-color: #222; border-width: 4px 4px 0; }
.marker svg { width: 16px; height: 16px; fill: #fff; }
.m1 { left: 714px; top: 16px; }
.m2 { left: 878px; top: 270px; }
.m3 { left: 1156px; top: 198px; }

/* contact */
.contact { padding: 33px 0 51px; }
.contact-in { display: flex; gap: 75px; }
.col-form { width: 653px; }
.col-addr { flex: 1; }
.sec-title { margin: 0; font-size: 24px; line-height: 30px; font-weight: 300; color: #222; }
.sec-sub { margin: 5px 0 33px; font-size: 14px; line-height: 20px; font-weight: 300; color: #777; }
.form { display: flex; flex-direction: column; gap: 15px; }
.form-row { display: grid; grid-template-columns: 311px 312px; gap: 30px; }
.field { display: block; width: 100%; height: 34px; border: 0; background: #eee; padding: 0 13px; font-size: 14px; font-weight: 300; color: #555; outline: 0; border-radius: 0; margin: 0; }
.field::placeholder { color: #999; opacity: 1; }
.area { height: 114px; padding-top: 7px; line-height: 18px; }
.form-end { display: flex; justify-content: flex-end; }
.send { width: 116px; height: 32px; border: 0; border-radius: 2px; background: #222; color: #fff; font: 500 14px Roboto, sans-serif; padding: 0; }
.addr { margin: 0 0 10px; font-size: 14px; line-height: 20px; font-weight: 300; color: #555; }
.addr.first { margin-top: -1px; }
.round-icons { display: flex; gap: 10px; margin-top: 31px; }
.ri { width: 32px; height: 32px; border-radius: 50%; background: #eee; display: flex; align-items: center; justify-content: center; color: #444; }
.ri svg, .sq svg { width: 14px; height: 14px; fill: currentColor; }

/* footer */
.footer { background: #222; padding: 35px 0 47px; color: #808080; }
.f-cols { display: grid; grid-template-columns: repeat(6, 195px); width: 1170px; height: 115px; }
.f-col h4 { margin: 0 0 11px; font-size: 16px; line-height: 24px; font-weight: 300; color: #fff; }
.f-col a { display: block; font-size: 14px; line-height: 20px; font-weight: 300; color: #808080; }
.sq-icons { display: flex; flex-wrap: wrap; gap: 5px; width: 145px; margin-top: 1px; }
.f-col .sq { display: flex; width: 24px; height: 24px; background: #3b3b3b; align-items: center; justify-content: center; color: #969696; }
.f-bottom { border-top: 1px solid #3a3a3a; margin-top: 52px; padding-top: 38px; display: flex; justify-content: space-between; }
.copy { margin: 0 0 1px; font-size: 12.500px; line-height: 20px; font-weight: 300; color: #888; }
.copy a { color: #484848; }
.f-links { display: flex; font-size: 12px; line-height: 20px; font-weight: 300; color: #8a8a8a; }
.f-links a { padding-right: 11px; margin-right: 13px; position: relative; }
.f-links a:not(:last-child)::after { content: ""; position: absolute; right: 0; top: 4px; height: 10px; width: 1px; background: #3f3f3f; }
.pay { display: flex; align-items: center; height: 41px; padding-top: 14px; color: #707070; margin-right: 0; }
.pl-ups { width: 18px; height: 21px; margin-right: 24px; }
.ups-t { font: 700 8.500px "Liberation Sans", sans-serif; fill: #9a9a9a; text-anchor: middle; letter-spacing: -.3px; }
.pl-dhl { width: 73px; height: 10px; margin-right: 25px; }
.dhl-t { font: italic 700 13.500px "Liberation Sans", sans-serif; fill: #787878; }
.pl-fx { width: 46px; font: 700 19px Roboto, sans-serif; font-stretch: 75%; letter-spacing: -.5px; color: #7a7a7a; margin-right: 30px; white-space: nowrap; }
.pl-ex { color: #5c5c5c; }
.pl-visa { width: 37px; font: italic 700 15px "Liberation Sans", sans-serif; color: #858585; margin-right: 24px; }
.pl-pp { width: 53px; font: italic 700 16px "Liberation Sans", sans-serif; color: #7a7a7a; margin-right: 24px; position: relative; top: -1px; white-space: nowrap; }
.pl-mc { width: 27px; height: 17px; }
.mc-t { font: 500 5px Roboto, sans-serif; fill: #333; text-anchor: middle; letter-spacing: -.1px; }
.to-top { position: fixed; right: 25px; bottom: 25px; width: 40px; height: 40px; border-radius: 50%; background: #a9a9a9; display: flex; align-items: center; justify-content: center; }
.to-top svg { width: 12px; height: 8px; }
```
